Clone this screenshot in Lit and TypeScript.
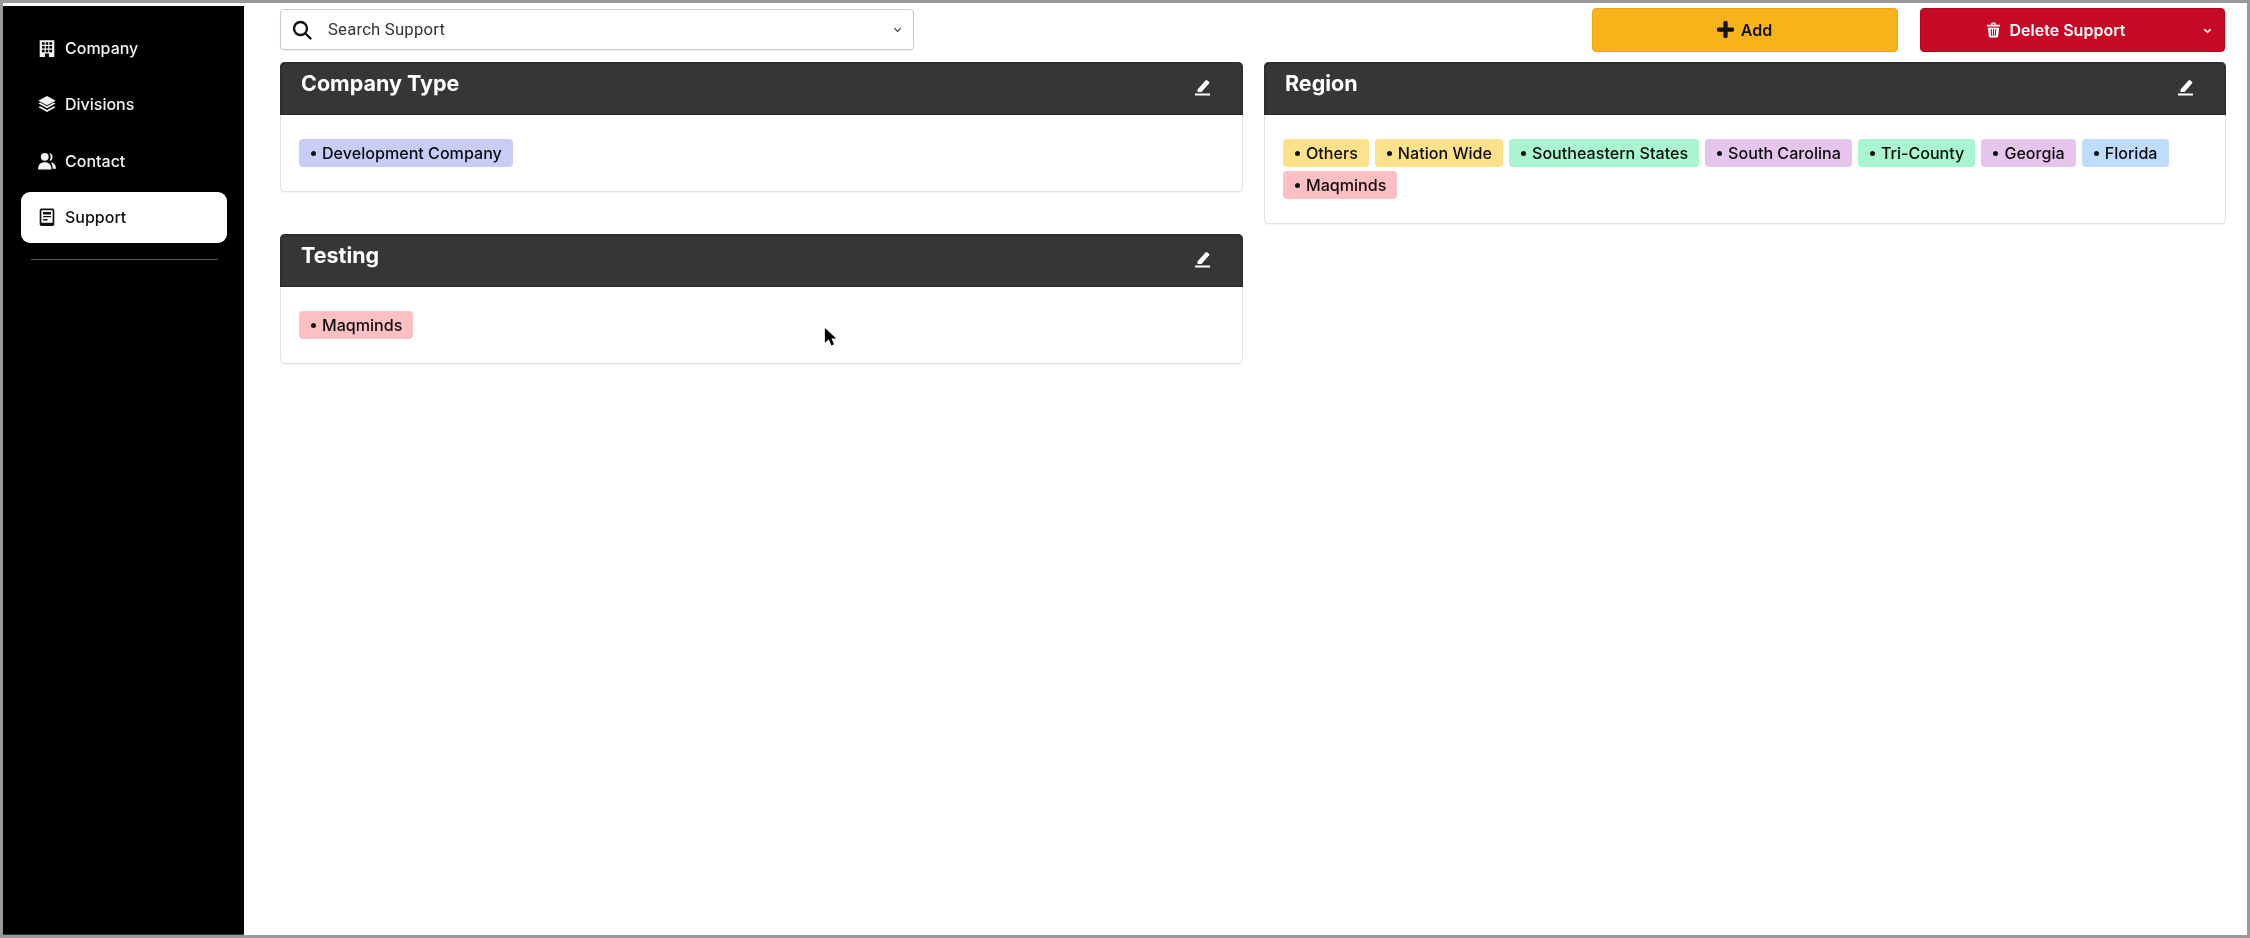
import { LitElement, html, css, svg } from "lit";
import { customElement } from "lit/decorators.js";

const icons = {
  company: svg`<path fill-rule="evenodd" d="M1.500 1h13v15H9.700v-3.200H6.300V16H1.500V1zm2 1.800v2.200h2.400V2.800H3.500zm3.400 0v2.200h2.200V2.800H6.900zm3.200 0v2.200h2.400V2.800h-2.400zM3.500 6.200v2.200h2.400V6.200H3.500zm3.400 0v2.200h2.200V6.200H6.900zm3.200 0v2.200h2.400V6.200h-2.400zM3.500 9.600v2.200h2.400V9.600H3.500zm3.400 0v2.200h2.200V9.600H6.900zm3.200 0v2.200h2.400V9.600h-2.400z"/>`,
  divisions: svg`<path d="M8 .8 15.800 5 8 9.200.2 5 8 .8z"/><path d="M.4 7.500 2 6.700 8 10l6-3.300 1.600.8L8 11.700.4 7.500z"/><path d="M.4 10.800 2 10 8 13.300l6-3.300 1.600.8L8 15.200.4 10.800z"/>`,
  contact: svg`<circle cx="6" cy="4.300" r="3.500"/><path d="M0 15.500c0-4.300 2.400-6.500 6-6.500s6 2.200 6 6.500H0z"/><path d="M10 .9a3.500 3.500 0 0 1 0 6.900c.8-1 1.200-2.100 1.200-3.400S10.800 1.900 10 .9z"/><path d="M11.500 9c2.900.5 4.500 2.700 4.500 5.800h-3c0-2.300-.4-4.200-1.500-5.800z"/>`,
  support: svg`<path fill-rule="evenodd" d="M3 .5h10A1.500 1.500 0 0 1 14.500 2v12.500A1.500 1.500 0 0 1 13 16H3a1.500 1.500 0 0 1-1.500-1.500V2A1.500 1.500 0 0 1 3 .5zM3 2v11h10V2H3z"/><path d="M4.500 3.500h7v2.200h-7zM4.500 7h7v1.300h-7zM4.500 9.700h4v1.300h-4z"/>`,
};

interface Tag { t: string; c: string }
const C = { indigo: "indigo", yellow: "yellow", green: "green", purple: "purple", blue: "blue", pink: "pink" };

@customElement("app-root")
export class AppRoot extends LitElement {
  static styles = css`
    :host { display: block; width: 2250px; height: 938px; font-family: Inter, "Liberation Sans", sans-serif; }
    * { box-sizing: border-box; }
    .frame { position: relative; display: flex; width: 2250px; height: 938px; border: 3px solid #9a9a9c; background: #fff; overflow: hidden; filter: blur(0.35px); }
    .side { width: 241px; margin-top: 3px; background: #000; padding: 16px 17px 0 18px; flex: none; display: flex; flex-direction: column; border-bottom: 1px solid #333; }
    .item { height: 51px; margin-bottom: 5.500px; border-radius: 9px; display: flex; align-items: center; gap: 9px; padding-left: 17px; color: #f2f2f2; font-size: 16px; font-weight: 500; }
    .item svg { width: 18px; height: 18px; fill: currentColor; flex: none; }
    .item.on { background: #fff; color: #111; }
    .rule { height: 1px; background: #5a5a5a; margin: 11px 9px 0 10px; }
    .main { flex: 1; min-width: 0; padding: 5px 21px 0 36px; display: flex; flex-direction: column; gap: 11px; }
    .top { display: flex; align-items: center; height: 43px; padding-right: 1px; }
    .search { width: 634px; height: 41px; border: 1px solid #c9c9c9; border-radius: 4px; display: flex; align-items: center; padding: 0 11px 0 11px; font-family: Roboto, sans-serif; font-size: 16.700px; color: #333; background: #fff; box-shadow: 0 1px 1px rgba(0,0,0,.08); }
    .search .lens { width: 20px; height: 20px; margin-right: 16px; flex: none; }
    .search span { flex: 1; letter-spacing: .2px; }
    .chev { width: 9px; height: 9px; flex: none; fill: none; stroke: currentColor; stroke-width: 1.300; }
    .btns { margin-left: auto; display: flex; gap: 22px; }
    .btn { height: 44px; border-radius: 4px; display: flex; align-items: center; justify-content: center; gap: 7px; font-size: 16px; font-weight: 600; position: relative; }
    .add { width: 306px; background: #f8b31a; border: 1px solid #eaa70f; color: #111; padding-right: 1px; }
    .add svg { width: 17px; height: 17px; fill: #111; }
    .del { width: 305px; gap: 9px; background: #c60a25; border: 1px solid #b80020; color: #fff; padding-right: 34px; }
    .del svg.trash { width: 15px; height: 16px; fill: #fff; }
    .del .chev { position: absolute; right: 12px; top: 17px; stroke-width: 2; }
    .grid { display: grid; grid-template-columns: 963px 962px; gap: 21px; align-items: start; }
    .col { display: flex; flex-direction: column; gap: 42px; }
    .card { border: 1px solid #e0e0e0; border-radius: 5px; background: #fff; box-shadow: 0 1px 1px rgba(0,0,0,.05); }
    .head { height: 53px; margin: -1px -1px 0; background: #363636; border-radius: 5px 5px 0 0; box-shadow: inset 0 0 3px #1c1c1c; display: flex; align-items: flex-start; justify-content: space-between; padding: 7px 31px 0 21px; color: #fff; font-size: 21.500px; font-weight: 700; line-height: 28px; }
    .head svg { width: 18px; height: 18px; margin-top: 9px; fill: #fff; }
    .body { padding: 24px 19px 24px 18px; display: flex; flex-wrap: wrap; gap: 4px 6px; }
    .tag { height: 28px; border-radius: 4px; padding: 0 11px 0 12px; display: flex; align-items: center; font-size: 16.100px; font-weight: 500; color: #0c0c0c; white-space: nowrap; }
    .tag::before { content: ""; width: 5px; height: 5px; border-radius: 50%; background: #111; margin-right: 6px; }
    .indigo { background: #c7cdf7; }
    .yellow { background: #fde28b; }
    .green { background: #a8f5cf; }
    .purple { background: #e6c5ec; }
    .blue { background: #bfdbfe; }
    .pink { background: #fbbfc4; }
    .cursor { position: absolute; left: 821px; top: 323px; width: 14px; height: 23px; fill: #000; }
  `;

  private card(title: string, tags: Tag[]) {
    return html`<section class="card">
      <header class="head"><span>${title}</span>
        <svg viewBox="0 0 18 18"><path d="M3.500 11.500 11.500 2.500a1.300 1.300 0 0 1 1.900-.1l1.500 1.300a1.300 1.300 0 0 1 .1 1.900L7.500 14H3.500z"/><rect x="1" y="15.500" width="15" height="2"/></svg>
      </header>
      <div class="body">${tags.map((g) => html`<span class="tag ${g.c}">${g.t}</span>`)}</div>
    </section>`;
  }

  render() {
    const nav: [string, keyof typeof icons][] = [["Company", "company"], ["Divisions", "divisions"], ["Contact", "contact"], ["Support", "support"]];
    return html`<div class="frame">
      <aside class="side">
        ${nav.map(([n, i]) => html`<div class="item ${n === "Support" ? "on" : ""}"><svg viewBox="0 0 16 16">${icons[i]}</svg>${n}</div>`)}
        <div class="rule"></div>
      </aside>
      <main class="main">
        <div class="top">
          <div class="search">
            <svg class="lens" viewBox="0 0 20 20" fill="none" stroke="#111" stroke-width="2.400"><circle cx="8.500" cy="8.500" r="6.500"/><path d="M13.500 13.500 18.500 18.500" stroke-linecap="round"/></svg>
            <span>Search Support</span>
            <svg class="chev" viewBox="0 0 10 10"><path d="M1.500 3.500 5 7l3.500-3.500"/></svg>
          </div>
          <div class="btns">
            <div class="btn add"><svg viewBox="0 0 16 16"><path d="M6 1.800a2 2 0 0 1 4 0V6h4.200a2 2 0 0 1 0 4H10v4.200a2 2 0 0 1-4 0V10H1.800a2 2 0 0 1 0-4H6z"/></svg>Add</div>
            <div class="btn del"><svg class="trash" viewBox="0 0 16 16"><path fill-rule="evenodd" d="M5.500 1.500A1.500 1.500 0 0 1 7 0h2a1.500 1.500 0 0 1 1.500 1.500V2.500H15v1.800H1V2.500h4.500zM7 1.200v1.300h2V1.200zM2 5.500h12l-1 9a1.500 1.500 0 0 1-1.500 1.500h-7A1.500 1.500 0 0 1 3 14.500zM5 7l.4 7h1.200L6.200 7zm2.400 0v7h1.200V7zm2.400 0-.4 7h1.200l.4-7z"/></svg>Delete Support<svg class="chev" viewBox="0 0 10 10"><path d="M1.500 3.500 5 7l3.500-3.500"/></svg></div>
          </div>
        </div>
        <div class="grid">
          <div class="col">
            ${this.card("Company Type", [{ t: "Development Company", c: C.indigo }])}
            ${this.card("Testing", [{ t: "Maqminds", c: C.pink }])}
          </div>
          <div class="col">
            ${this.card("Region", [
              { t: "Others", c: C.yellow }, { t: "Nation Wide", c: C.yellow }, { t: "Southeastern States", c: C.green },
              { t: "South Carolina", c: C.purple }, { t: "Tri-County", c: C.green }, { t: "Georgia", c: C.purple },
              { t: "Florida", c: C.blue }, { t: "Maqminds", c: C.pink },
            ])}
          </div>
        </div>
      </main>
      <svg class="cursor" viewBox="0 0 16 24"><path d="M1 1v17l4.500-4 3 7 3-1.300-3-6.700H14z"/></svg>
    </div>`;
  }
}
